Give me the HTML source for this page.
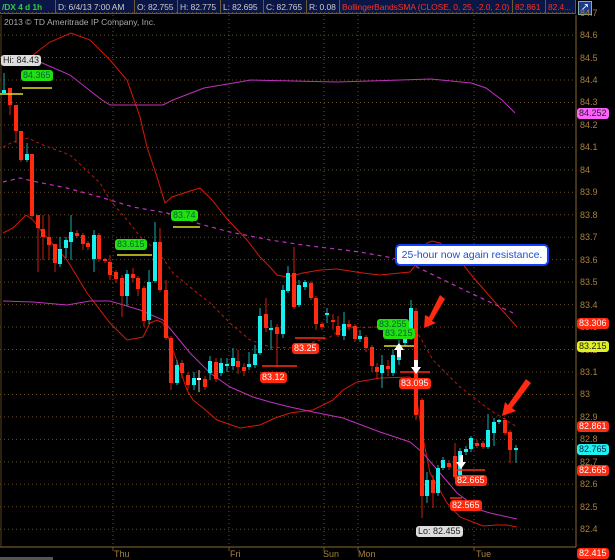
<!DOCTYPE html>
<html><head><meta charset="utf-8"><style>
body{margin:0;background:#000;width:615px;height:560px;overflow:hidden;font-family:"Liberation Sans",sans-serif}
#hd{position:absolute;left:0;top:0;width:615px;height:15px;background:#000}
.c{position:absolute;top:0;height:14px;background:#0a1646;border-right:1px solid #6a5a30;border-bottom:1px solid #6a5a30;color:#ccc;font-size:8.5px;line-height:14px;padding-left:2px;box-sizing:border-box;white-space:nowrap;overflow:hidden;letter-spacing:-0.1px}
.ax{position:absolute;left:580px;color:#a8803c;font-size:9px;line-height:10px}
.bx{position:absolute;color:#a8803c;font-size:9px}
.tg{position:absolute;font-size:9px;line-height:11px;height:11px;padding:0 2px;border-radius:3px;text-align:center}
.r{background:#ff2a10;color:#fff}
.g{background:#22e010;color:#063}
.gr{background:#ddd;color:#222}
</style></head><body>
<div id="hd">
<div class="c" style="left:0;width:56px;color:#2ecc40;font-weight:bold">/DX 4 d 1h</div>
<div class="c" style="left:56px;width:79px">D: 6/4/13 7:00 AM</div>
<div class="c" style="left:135px;width:43px">O: 82.755</div>
<div class="c" style="left:178px;width:43px">H: 82.775</div>
<div class="c" style="left:221px;width:43px">L: 82.695</div>
<div class="c" style="left:264px;width:43px">C: 82.765</div>
<div class="c" style="left:307px;width:33px">R: 0.08</div>
<div class="c" style="left:340px;width:173px;color:#ff3020">BollingerBandsSMA (CLOSE, 0, 25, -2.0, 2.0)</div>
<div class="c" style="left:513px;width:33px;color:#ff3020">82.861</div>
<div class="c" style="left:546px;width:30px;color:#ff3020">82.4...</div>
<div style="position:absolute;left:578px;top:1px;width:12px;height:12px;background:#1b3a8a;border:1px solid #8aa;color:#fff;font-size:10px;line-height:12px;text-align:center">↗</div>
</div>
<div style="position:absolute;left:4px;top:17px;color:#aaa;font-size:8.5px">2013 © TD Ameritrade IP Company, Inc.</div>
<svg id="sv" width="615" height="560" style="position:absolute;left:0;top:0">
<g stroke="#6a5020" stroke-dasharray="1,3" stroke-width="1" id="grid"></g>
<line x1="576" y1="15" x2="576" y2="547" stroke="#8a6a30"/>
<line x1="0" y1="547" x2="576" y2="547" stroke="#8a6a30"/>
<line x1="1" y1="15" x2="1" y2="547" stroke="#5a4020"/>
<rect x="0" y="557" width="53" height="3" fill="#555"/>
<polyline fill="none" stroke="#d81808" stroke-width="1" points="29,58 50,42 71,33 90,40 110,60 127,80 140,117 147,147 157,177 165,203 172,197 187,192 200,188 212,200 228,220 247,240 260,257 270,267 277,275 287,277 303,273 320,270 337,269 363,273 380,275 410,272 417,263 427,243 432,241 440,243 457,257 473,277 493,300 517,327"/>
<polyline fill="none" stroke="#d81808" stroke-width="1" points="3,233 13,228 26,215 33,220 43,233 67,260 87,293 110,323 127,340 143,337 150,323 157,320 163,323 173,350 187,390 193,400 202,407 217,420 240,428 260,425 275,418 290,413 313,410 333,400 343,390 357,382 380,378 410,377 416,395 422,433 430,473 447,503 460,517 483,526 497,525 507,525 517,527"/>
<polyline fill="none" stroke="#c01808" stroke-width="1" stroke-dasharray="3,3" points="3,147 13,142 28,138 43,145 70,155 83,167 100,183 110,200 127,220 143,240 157,250 173,273 190,287 210,303 230,323 250,340 270,347 290,348 310,343 330,337 343,328 380,327 413,327 420,337 433,360 460,387 490,410 517,427"/>
<polyline fill="none" stroke="#c030c0" stroke-width="1" points="25,58 40,62 70,75 102,100 110,105 163,105 173,100 204,88 251,80 337,82 431,79 471,83 486,88 502,100 515,113"/>
<polyline fill="none" stroke="#c030c0" stroke-width="1" points="3,301 33,302 67,305 90,301 110,301 140,310 163,320 177,337 190,353 210,373 230,387 253,397 270,402 290,407 313,412 343,418 380,432 410,442 423,453 440,473 457,493 480,510 490,513 517,519"/>
<polyline fill="none" stroke="#c030c0" stroke-width="1.2" stroke-dasharray="4,4" points="3,182 20,178 37,182 67,188 100,197 133,207 167,213 200,224 230,232 270,240 303,245 360,252 393,258 417,267 460,288 513,313"/>
<g id="cd"></g>
<g stroke="#e0e020" stroke-width="1.5">
<line x1="0" y1="94" x2="23" y2="94"/><line x1="22" y1="88" x2="52" y2="88"/>
<line x1="173" y1="227" x2="200" y2="227"/><line x1="117" y1="255" x2="152" y2="255"/>
<line x1="384" y1="346" x2="414" y2="346"/></g>
<g stroke="#ff2a10" stroke-width="1.5">
<line x1="295" y1="338" x2="325" y2="338"/><line x1="262" y1="366" x2="297" y2="366"/>
<line x1="400" y1="372" x2="430" y2="372"/><line x1="456" y1="470" x2="485" y2="470"/>
<line x1="450" y1="498" x2="462" y2="498"/></g>
<g fill="#ff2a10">
<path d="M440,295 L445,299 L432,321 L436,323 L424,328 L425,315 L429,317 Z"/>
<path d="M526,379 L531,383 L512,408 L516,411 L502,416 L505,402 L508,405 Z"/></g>
<g fill="#fff">
<path d="M399,343 L404,350 L401,350 L401,357 L397,357 L397,350 L394,350 Z"/>
<path d="M414,360 L418,360 L418,367 L421,367 L416,374 L411,367 L414,367 Z"/>
<path d="M459,455 L463,455 L463,462 L466,462 L461,469 L456,462 L459,462 Z"/></g>
</svg>
<div class="tg gr" style="left:1px;top:55px">Hi: 84.43</div>
<div class="tg g" style="left:21px;top:70px">84.365</div>
<div class="tg g" style="left:171px;top:210px">83.74</div>
<div class="tg g" style="left:115px;top:239px">83.615</div>
<div class="tg g" style="left:377px;top:319px">83.255</div>
<div class="tg g" style="left:383px;top:328px">83.215</div>
<div class="tg r" style="left:292px;top:343px">83.25</div>
<div class="tg r" style="left:260px;top:372px">83.12</div>
<div class="tg r" style="left:399px;top:378px">83.095</div>
<div class="tg r" style="left:455px;top:475px">82.665</div>
<div class="tg r" style="left:450px;top:500px">82.565</div>
<div class="tg gr" style="left:416px;top:526px">Lo: 82.455</div>
<div style="position:absolute;left:395px;top:244px;width:150px;height:18px;background:#fff;border:2px solid #1040ff;border-radius:5px;color:#2050d0;font-size:10.5px;line-height:18px;text-align:center">25-hour now again resistance.</div>
<div id="axl"></div>
<div class="tg" style="left:577px;top:108px;background:#ff60ff;color:#222">84.252</div>
<div class="tg r" style="left:577px;top:318px">83.306</div>
<div class="tg" style="left:577px;top:341px;background:#e0f020;color:#222">83.215</div>
<div class="tg r" style="left:577px;top:421px">82.861</div>
<div class="tg" style="left:577px;top:444px;background:#20f0f0;color:#024">82.765</div>
<div class="tg r" style="left:577px;top:465px">82.665</div>
<div class="tg r" style="left:577px;top:548px">82.415</div>
<div class="bx" style="left:114px;top:549px">Thu</div>
<div class="bx" style="left:230px;top:549px">Fri</div>
<div class="bx" style="left:323px;top:549px">Sun</div>
<div class="bx" style="left:358px;top:549px">Mon</div>
<div class="bx" style="left:476px;top:549px">Tue</div>
<script>
var ns="http://www.w3.org/2000/svg";
function el(p,t,a){var e=document.createElementNS(ns,t);for(var k in a)e.setAttribute(k,a[k]);p.appendChild(e);return e;}
var grid=document.getElementById('grid'),axl=document.getElementById('axl'),h='';
var vals=['84.7','84.6','84.5','84.4','84.3','84.2','84.1','84','83.9','83.8','83.7','83.6','83.5','83.4','83.3','83.2','83.1','83','82.9','82.8','82.7','82.6','82.5','82.4'];
vals.forEach(function(v){var y=80+(84.4-parseFloat(v))*224.6;el(grid,'line',{x1:0,y1:y,x2:576,y2:y});h+='<div class="ax" style="top:'+(y-5)+'px">'+v+'</div>';});
axl.innerHTML=h;
[113,229,324,358,474].forEach(function(x){el(grid,'line',{x1:x,y1:15,x2:x,y2:547});el(grid,'line',{x1:x,y1:547,x2:x,y2:551,'stroke-dasharray':'none'});});
var C=[[4,90,93,'c',73,93],[10,88,105,'r',88,115],[16,105,131,'r',105,143],[21,131,160,'r',131,162],[27,154,160,'c',143,162],[32,154,216,'r',154,218],[38,215,228,'r',215,272],[43,229,237,'r',215,260],[49,237,245,'r',215,260],[55,244,263,'r',244,272],[60,249,264,'c',237,267],[66,240,248,'c',237,258],[71,232,242,'c',215,260],[77,233,236,'r',230,238],[83,235,244,'r',233,250],[88,243,247,'r',241,250],[94,235,259,'c',230,272],[99,235,259,'r',233,262],[105,259,261,'r',258,263],[110,262,275,'r',255,280],[116,272,279,'r',270,283],[122,278,296,'r',275,317],[127,274,296,'c',270,306],[133,274,278,'r',268,282],[138,278,289,'r',276,296],[144,288,321,'r',286,327],[149,282,320,'c',270,324],[155,242,281,'c',222,283],[160,242,290,'r',228,292],[166,290,338,'r',280,340],[171,338,383,'r',336,390],[177,365,383,'c',360,385],[182,363,373,'r',360,378],[188,375,385,'r',372,390],[194,378,385,'c',372,390],[199,378,380,'w',370,392],[205,379,387,'r',376,390],[210,361,373,'c',356,380],[216,362,379,'r',358,382],[221,363,373,'c',358,376],[227,364,366,'c',358,372],[233,358,366,'c',348,370],[238,361,367,'r',350,374],[244,367,371,'r',363,376],[249,364,367,'c',352,370],[255,354,365,'c',345,368],[260,316,353,'c',308,355],[266,314,328,'r',298,332],[271,328,330,'c',320,350],[277,327,334,'r',324,367],[283,290,334,'c',285,338],[288,273,291,'c',266,293],[294,273,307,'r',247,309],[299,285,305,'c',280,307],[305,282,287,'c',280,290],[311,283,298,'r',281,300],[316,298,324,'r',296,330],[322,324,327,'r',322,330],[327,313,315,'c',308,323],[333,320,322,'r',314,330],[338,326,335,'r',316,337],[344,324,336,'c',312,340],[349,324,327,'r',320,330],[355,326,339,'r',324,342],[360,336,339,'c',330,342],[366,337,348,'r',335,352],[372,347,366,'r',345,372],[377,367,372,'r',363,378],[382,365,373,'c',355,388],[388,366,369,'r',360,376],[393,355,373,'c',350,376],[399,345,360,'c',340,365],[405,333,343,'c',328,346],[411,308,337,'c',300,340],[416,311,415,'r',308,420],[422,400,496,'r',398,518],[427,480,496,'c',472,503],[433,480,493,'r',475,508],[438,468,493,'c',465,496],[443,460,468,'c',457,470],[449,463,467,'r',460,470],[455,456,477,'r',443,479],[460,451,475,'c',448,478],[466,449,452,'c',446,455],[471,438,449,'c',436,452],[477,443,446,'r',440,448],[483,443,447,'r',441,449],[488,430,447,'c',414,449],[494,422,433,'c',418,446],[499,420,422,'c',419,424],[505,420,433,'r',418,435],[510,432,450,'r',430,463],[516,448,450,'c',445,463]];
var cd=document.getElementById('cd'),col={c:'#18f0f0',r:'#ff2a10',w:'#fff'},wk={c:'#18b0b0',r:'#d02010',w:'#ccc'};
C.forEach(function(a){var x=a[0];el(cd,'line',{x1:x,y1:a[4],x2:x,y2:a[5],stroke:wk[a[3]],'stroke-width':1});el(cd,'rect',{x:x-2,y:a[1],width:4,height:Math.max(1.5,a[2]-a[1]),fill:col[a[3]]});});
</script>
</body></html>
